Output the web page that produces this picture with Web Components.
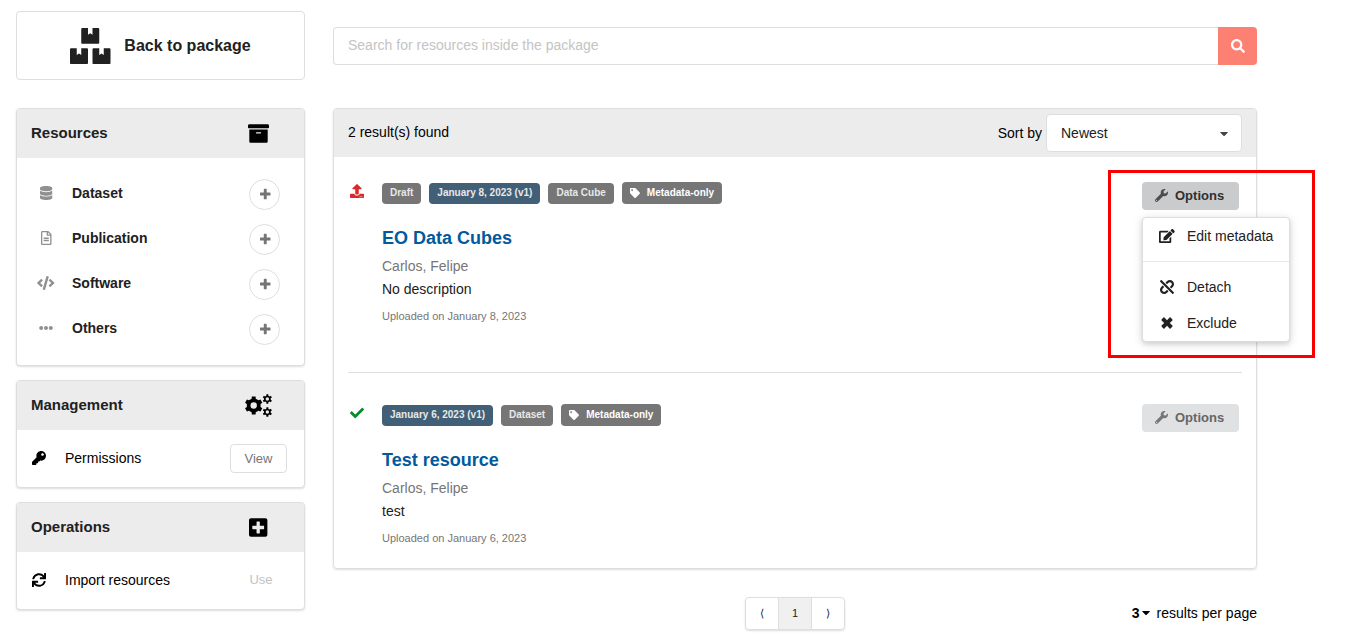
<!DOCTYPE html>
<html lang="en">
<head>
<meta charset="utf-8">
<title>Package resources</title>
<style>
  body { margin: 0; background: #fff; color: #212121; font: 14px/20px "Liberation Sans", Arial, sans-serif; }
</style>
</head>
<body>
<package-page></package-page>

<script>
const ICONS = {
  boxes: ['0 0 576 512', 'M560 288h-80v96l-32-21.3-32 21.3v-96h-80c-8.8 0-16 7.2-16 16v192c0 8.8 7.2 16 16 16h224c8.8 0 16-7.2 16-16V304c0-8.8-7.2-16-16-16zm-384-64h224c8.8 0 16-7.2 16-16V16c0-8.8-7.2-16-16-16h-80v96l-32-21.3L256 96V0h-80c-8.8 0-16 7.2-16 16v192c0 8.8 7.2 16 16 16zm64 64h-80v96l-32-21.3L96 384v-96H16c-8.8 0-16 7.2-16 16v192c0 8.8 7.2 16 16 16h224c8.8 0 16-7.2 16-16V304c0-8.8-7.2-16-16-16z'],
  archive: ['0 0 512 512', 'M32 448c0 17.7 14.3 32 32 32h384c17.7 0 32-14.3 32-32V160H32v288zm160-212c0-6.6 5.4-12 12-12h104c6.6 0 12 5.4 12 12v8c0 6.6-5.4 12-12 12H204c-6.6 0-12-5.4-12-12v-8zM480 32H32C14.3 32 0 46.3 0 64v48c0 8.8 7.2 16 16 16h480c8.8 0 16-7.2 16-16V64c0-17.7-14.3-32-32-32z'],
  database: ['0 0 448 512', 'M448 73.143v45.714C448 159.143 347.667 192 224 192S0 159.143 0 118.857V73.143C0 32.857 100.333 0 224 0s224 32.857 224 73.143zM448 176v102.857C448 319.143 347.667 352 224 352S0 319.143 0 278.857V176c48.125 33.143 136.208 48.572 224 48.572S399.874 209.143 448 176zm0 160v102.857C448 479.143 347.667 512 224 512S0 479.143 0 438.857V336c48.125 33.143 136.208 48.572 224 48.572S399.874 369.143 448 336z'],
  file: ['0 0 384 512', 'M288 248v28c0 6.6-5.4 12-12 12H108c-6.6 0-12-5.4-12-12v-28c0-6.6 5.4-12 12-12h168c6.6 0 12 5.4 12 12zm-12 72H108c-6.6 0-12 5.4-12 12v28c0 6.6 5.4 12 12 12h168c6.6 0 12-5.4 12-12v-28c0-6.6-5.4-12-12-12zm108-188.1V464c0 26.5-21.5 48-48 48H48c-26.5 0-48-21.5-48-48V48C0 21.5 21.5 0 48 0h204.1C264.8 0 277 5.1 286 14.1L369.9 98c9 8.9 14.1 21.2 14.1 33.9zm-128-80V128h76.1L256 51.9zM336 464V176H232c-13.3 0-24-10.7-24-24V48H48v416h288z'],
  code: ['0 0 640 512', 'M278.9 511.5l-61-17.7c-6.4-1.8-10-8.5-8.2-14.9L346.2 8.7c1.8-6.4 8.5-10 14.9-8.2l61 17.7c6.4 1.8 10 8.5 8.2 14.9L293.8 503.3c-1.9 6.4-8.5 10.1-14.9 8.2zm-114-112.2l43.5-46.4c4.6-4.9 4.3-12.7-.8-17.2L117 256l90.6-79.7c5.1-4.5 5.5-12.3.8-17.2l-43.5-46.4c-4.5-4.8-12.1-5.1-17-.5L3.8 247.2c-5.1 4.7-5.1 12.8 0 17.5l144.1 135.1c4.9 4.6 12.5 4.4 17-.5zm327.2.6l144.1-135.1c5.1-4.7 5.1-12.8 0-17.5L492.1 112.1c-4.8-4.5-12.4-4.3-17 .5L431.6 159c-4.6 4.9-4.3 12.7.8 17.2L523 256l-90.6 79.7c-5.1 4.5-5.5 12.3-.8 17.2l43.5 46.4c4.5 4.9 12.1 5.1 17 .6z'],
  ellipsis: ['0 0 512 512', 'M328 256c0 39.8-32.2 72-72 72s-72-32.2-72-72 32.2-72 72-72 72 32.2 72 72zm104-72c-39.8 0-72 32.2-72 72s32.2 72 72 72 72-32.2 72-72-32.2-72-72-72zm-352 0c-39.8 0-72 32.2-72 72s32.2 72 72 72 72-32.2 72-72-32.2-72-72-72z'],
  plus: ['0 0 448 512', 'M448 294.2v-76.4c0-13.3-10.7-24-24-24H286.2V56c0-13.3-10.7-24-24-24h-76.4c-13.3 0-24 10.7-24 24v137.8H24c-13.3 0-24 10.7-24 24v76.4c0 13.3 10.7 24 24 24h137.8V456c0 13.3 10.7 24 24 24h76.4c13.3 0 24-10.7 24-24V318.2H424c13.3 0 24-10.7 24-24z'],
  key: ['0 0 512 512', 'M512 176.001C512 273.203 433.202 352 336 352c-11.22 0-22.19-1.062-32.827-3.069l-24.012 27.014A23.999 23.999 0 0 1 261.223 384H224v40c0 13.255-10.745 24-24 24h-40v40c0 13.255-10.745 24-24 24H24c-13.255 0-24-10.745-24-24v-78.059c0-6.365 2.529-12.47 7.029-16.971l161.802-161.802C163.108 213.814 160 195.271 160 176 160 78.798 238.797.001 335.999 0 433.488-.001 512 78.511 512 176.001zM336 128c0 26.51 21.49 48 48 48s48-21.49 48-48-21.49-48-48-48-48 21.49-48 48z'],
  sync: ['0 0 512 512', 'M440.65 12.57l4 82.77A247.16 247.16 0 0 0 255.83 8C134.73 8 33.91 94.92 12.29 209.82A12 12 0 0 0 24.09 224h49.05a12 12 0 0 0 11.67-9.26 175.91 175.91 0 0 1 317-56.94l-101.46-4.86a12 12 0 0 0-12.57 12v47.41a12 12 0 0 0 12 12H500a12 12 0 0 0 12-12V12a12 12 0 0 0-12-12h-47.37a12 12 0 0 0-11.98 12.57zM255.83 432a175.61 175.61 0 0 1-146-77.8l101.8 4.87a12 12 0 0 0 12.57-12v-47.4a12 12 0 0 0-12-12H12a12 12 0 0 0-12 12V500a12 12 0 0 0 12 12h47.35a12 12 0 0 0 12-12.6l-4.15-82.57A247.17 247.17 0 0 0 255.83 504c121.11 0 221.93-86.92 243.55-201.82a12 12 0 0 0-11.8-14.18h-49.05a12 12 0 0 0-11.67 9.26A175.86 175.86 0 0 1 255.83 432z'],
  plusSquare: ['0 0 448 512', 'M400 32H48C21.5 32 0 53.5 0 80v352c0 26.5 21.5 48 48 48h352c26.5 0 48-21.5 48-48V80c0-26.5-21.5-48-48-48zm-32 252c0 6.6-5.4 12-12 12h-92v92c0 6.6-5.4 12-12 12h-56c-6.6 0-12-5.4-12-12v-92H92c-6.6 0-12-5.4-12-12v-56c0-6.6 5.4-12 12-12h92v-92c0-6.6 5.4-12 12-12h56c6.6 0 12 5.4 12 12v92h92c6.6 0 12 5.4 12 12v56z'],
  search: ['0 0 512 512', 'M505 442.7L405.3 343c-4.5-4.5-10.6-7-17-7H372c27.6-35.3 44-79.7 44-128C416 93.1 322.9 0 208 0S0 93.1 0 208s93.1 208 208 208c48.3 0 92.7-16.4 128-44v16.3c0 6.4 2.5 12.5 7 17l99.7 99.7c9.4 9.4 24.6 9.4 33.9 0l28.3-28.3c9.4-9.4 9.4-24.6.1-34zM208 336c-70.7 0-128-57.2-128-128 0-70.7 57.2-128 128-128 70.7 0 128 57.2 128 128 0 70.7-57.2 128-128 128z'],
  upload: ['0 0 512 512', 'M296 384h-80c-13.3 0-24-10.7-24-24V192h-87.7c-17.8 0-26.7-21.5-14.1-34.1L242.3 5.7c7.5-7.5 19.8-7.5 27.3 0l152.2 152.2c12.6 12.6 3.7 34.1-14.1 34.1H320v168c0 13.3-10.7 24-24 24zm216-8v112c0 13.3-10.7 24-24 24H24c-13.3 0-24-10.7-24-24V376c0-13.3 10.7-24 24-24h136v8c0 30.9 25.1 56 56 56h80c30.9 0 56-25.1 56-56v-8h136c13.3 0 24 10.7 24 24zm-124 88c0-11-9-20-20-20s-20 9-20 20 9 20 20 20 20-9 20-20zm64 0c0-11-9-20-20-20s-20 9-20 20 9 20 20 20 20-9 20-20z'],
  check: ['0 0 512 512', 'M173.898 439.404l-166.4-166.4c-9.997-9.997-9.997-26.206 0-36.204l36.203-36.204c9.997-9.998 26.207-9.998 36.204 0L192 312.69 432.095 72.596c9.997-9.997 26.207-9.997 36.204 0l36.203 36.204c9.997 9.997 9.997 26.206 0 36.204l-294.4 294.401c-9.998 9.997-26.207 9.997-36.204-.001z'],
  tag: ['0 0 512 512', 'M0 252.118V48C0 21.49 21.49 0 48 0h204.118a48 48 0 0 1 33.941 14.059l211.882 211.882c18.745 18.745 18.745 49.137 0 67.882L293.823 497.941c-18.745 18.745-49.137 18.745-67.882 0L14.059 286.059A48 48 0 0 1 0 252.118zM112 64c-26.51 0-48 21.49-48 48s21.49 48 48 48 48-21.49 48-48-21.49-48-48-48z'],
  wrench: ['0 0 512 512', 'M507.73 109.1c-2.24-9.03-13.54-12.09-20.12-5.51l-74.36 74.36-67.88-11.31-11.31-67.88 74.36-74.36c6.62-6.62 3.43-17.9-5.66-20.16-47.38-11.74-99.55.91-136.58 37.93-39.64 39.64-50.55 97.1-34.05 147.2L18.74 402.76c-24.99 24.99-24.99 65.51 0 90.5 24.99 24.99 65.51 24.99 90.5 0l213.21-213.21c50.12 16.71 107.47 5.68 147.37-34.22 37.07-37.07 49.7-89.32 37.91-136.73zM64 472c-13.25 0-24-10.75-24-24 0-13.26 10.75-24 24-24s24 10.74 24 24c0 13.25-10.75 24-24 24z'],
  edit: ['0 0 576 512', 'M402.6 83.2l90.2 90.2c3.8 3.8 3.8 10 0 13.8L274.4 405.6l-92.8 10.3c-12.4 1.4-22.9-9.1-21.5-21.5l10.3-92.8L388.8 83.2c3.8-3.8 10-3.8 13.8 0zm162-22.9l-48.8-48.8c-15.2-15.2-39.9-15.2-55.2 0l-35.4 35.4c-3.8 3.8-3.8 10 0 13.8l90.2 90.2c3.8 3.8 10 3.8 13.8 0l35.4-35.4c15.2-15.3 15.2-40 0-55.2zM384 346.2V448H64V128h229.8c3.2 0 6.2-1.3 8.5-3.5l40-40c7.6-7.6 2.2-20.5-8.5-20.5H48C21.5 64 0 85.5 0 112v352c0 26.5 21.5 48 48 48h352c26.5 0 48-21.5 48-48V306.2c0-10.7-12.9-16-20.5-8.5l-40 40c-2.2 2.3-3.5 5.3-3.5 8.5z'],
  unlink: ['0 0 512 512', 'M304.083 405.907c4.686 4.686 4.686 12.284 0 16.971l-44.674 44.674c-59.263 59.262-155.693 59.266-214.961 0-59.264-59.265-59.264-155.696 0-214.96l44.675-44.675c4.686-4.686 12.284-4.686 16.971 0l39.598 39.598c4.686 4.686 4.686 12.284 0 16.971l-44.675 44.674c-28.072 28.073-28.072 73.75 0 101.823 28.072 28.072 73.75 28.073 101.824 0l44.674-44.674c4.686-4.686 12.284-4.686 16.971 0l39.597 39.598zm-56.568-260.216c4.686 4.686 12.284 4.686 16.971 0l44.674-44.674c28.072-28.075 73.75-28.073 101.824 0 28.072 28.073 28.072 73.75 0 101.823l-44.675 44.674c-4.686 4.686-4.686 12.284 0 16.971l39.598 39.598c4.686 4.686 12.284 4.686 16.971 0l44.675-44.675c59.263-59.265 59.265-155.695 0-214.96-59.266-59.264-155.695-59.264-214.961 0l-44.674 44.674c-4.686 4.686-4.686 12.284 0 16.971l39.597 39.598zm234.828 359.28l22.627-22.627c9.373-9.373 9.373-24.569 0-33.941L63.598 7.029c-9.373-9.373-24.569-9.373-33.941 0L7.029 29.657c-9.373 9.373-9.373 24.569 0 33.941l441.373 441.373c9.373 9.372 24.569 9.372 33.941 0z'],
  close: ['0 0 14 14', 'M4.4 1.6 7 4.2 9.6 1.6q.5-.5 1 0L12.4 3.4q.5.5 0 1L9.8 7l2.6 2.6q.5.5 0 1L10.6 12.4q-.5.5-1 0L7 9.8 4.4 12.4q-.5.5-1 0L1.6 10.6q-.5-.5 0-1L4.2 7 1.6 4.4q-.5-.5 0-1L3.4 1.6q.5-.5 1 0z'],
  caret: ['0 0 320 512', 'M31.3 192h257.3c17.8 0 26.7 21.5 14.1 34.1L174.1 354.8c-7.8 7.8-20.5 7.8-28.3 0L17.2 226.1C4.6 213.5 13.5 192 31.3 192z'],
  cogs: ['0 0 640 512', gear(212, 256, 222, 172, 78, 6) + gear(545, 98, 116, 84, 42, 6) + gear(545, 414, 116, 84, 42, 6)]
};

/* Outline of a toothed wheel with a round hole. */
function gear(cx, cy, outer, inner, hole, teeth) {
  const step = 2 * Math.PI / teeth, pts = [];
  for (let i = 0; i < teeth; i++) {
    for (const [part, r] of [[-0.28, inner], [-0.2, outer], [0.2, outer], [0.28, inner]]) {
      const a = (i + part) * step - Math.PI / 2;
      pts.push((cx + r * Math.cos(a)).toFixed(1) + ' ' + (cy + r * Math.sin(a)).toFixed(1));
    }
  }
  return 'M' + pts.join('L') + 'z' +
    `M${cx - hole} ${cy}a${hole} ${hole} 0 1 0 ${2 * hole} 0a${hole} ${hole} 0 1 0 ${-2 * hole} 0z`;
}

function define(name, html, setup) {
  const template = document.createElement('template');
  template.innerHTML = html;
  customElements.define(name, class extends HTMLElement {
    constructor() {
      super();
      this.attachShadow({ mode: 'open' }).append(template.content.cloneNode(true));
    }
    connectedCallback() { if (setup) setup(this, this.shadowRoot); }
  });
}

define('ui-icon', `
  <style>
    :host { display: inline-flex; flex: none; justify-content: center; align-items: center; width: 18px; height: 14px; }
    svg { height: 100%; fill: currentColor; fill-rule: evenodd; overflow: visible; display: block; }
  </style>
  <svg aria-hidden="true"><path/></svg>`, (host, root) => {
  const [box, d] = ICONS[host.getAttribute('name')];
  root.querySelector('svg').setAttribute('viewBox', box);
  root.querySelector('path').setAttribute('d', d);
});

define('back-button', `
  <style>
    :host { display: block; }
    button { display: flex; align-items: center; justify-content: center; gap: 14px; width: 100%; height: 69px;
      border: 1px solid #dededf; border-radius: 4px; background: #fff; color: #212121; font: bold 16px/20px "Liberation Sans", Arial, sans-serif; padding: 0; }
    ui-icon { width: 40px; height: 36px; }
  </style>
  <button type="button"><ui-icon name="boxes"></ui-icon><slot></slot></button>`);

define('side-panel', `
  <style>
    :host { display: block; border: 1px solid #dededf; border-radius: 4px; box-shadow: 0 1px 2px rgba(34,36,38,.15); background: #fff; }
    header { display: flex; align-items: center; justify-content: space-between; height: 49px; padding: 0 31px 0 14px; background: #ececec; border-radius: 3px 3px 0 0; }
    h2 { margin: 0; padding-bottom: 2px; font-size: 15px; line-height: 20px; }
    ui-icon { width: 29px; height: 21px; color: #000; }
  </style>
  <header><h2></h2></header>
  <slot></slot>`, (host, root) => {
  root.querySelector('h2').textContent = host.getAttribute('heading');
  const icon = document.createElement('ui-icon');
  icon.setAttribute('name', host.getAttribute('icon'));
  root.querySelector('header').append(icon);
});

define('resource-type', `
  <style>
    :host { display: flex; align-items: center; box-sizing: border-box; height: 45px; padding: 0 24px 2px 20px; }
    .kind { display: flex; margin-right: 17px; color: #909090; }
    b { flex: 1; }
    button { display: flex; align-items: center; justify-content: center; width: 31px; height: 31px; padding: 0 0 1px 1px; margin-top: 3px;
      border: 1px solid #dededf; border-radius: 50%; background: #fff; color: #767676; }
    button ui-icon { height: 12px; }
  </style>
  <span class="kind"></span><b><slot></slot></b>
  <button type="button"><ui-icon name="plus"></ui-icon></button>`, (host, root) => {
  const icon = document.createElement('ui-icon');
  icon.setAttribute('name', host.getAttribute('icon'));
  root.querySelector('.kind').append(icon);
  root.querySelector('button').setAttribute('aria-label', 'Add ' + host.textContent);
});

define('action-row', `
  <style>
    :host { display: flex; align-items: center; box-sizing: border-box; height: 57px; padding: 0 17px 2px 13px; color: #000; }
    .icon { display: flex; margin-right: 17px; }
    .label { flex: 1; }
    button { width: 57px; height: 29px; margin-top: 2px; padding: 0; border: 1px solid #dededf; border-radius: 4px; background: #fff; color: #767676; font: 13px/16px "Liberation Sans", Arial, sans-serif; }
    button:disabled { border-color: transparent; color: #c2c2c2; width: 52px; margin-top: 0; }
  </style>
  <span class="icon"></span><span class="label"><slot></slot></span><button type="button"></button>`, (host, root) => {
  const icon = document.createElement('ui-icon');
  icon.setAttribute('name', host.getAttribute('icon'));
  root.querySelector('.icon').append(icon);
  const button = root.querySelector('button');
  button.textContent = host.getAttribute('action');
  button.disabled = host.hasAttribute('disabled');
});

define('search-bar', `
  <style>
    :host { display: flex; height: 38px; }
    input { flex: 1; min-width: 0; box-sizing: border-box; border: 1px solid #dededf; border-right: 0; border-radius: 4px 0 0 4px; padding: 0 14px 2px; outline: 0;
      font: 14px/20px "Liberation Sans", Arial, sans-serif; color: #212121; background: #fff; }
    input::placeholder { color: #c4c4c4; opacity: 1; }
    button { display: flex; align-items: center; justify-content: center; width: 39px; padding: 0; border: 0; border-radius: 0 4px 4px 0; background: #fd8172; color: #fff; }
  </style>
  <input type="text" aria-label="Search" placeholder="Search for resources inside the package">
  <button type="button" aria-label="Search"><ui-icon name="search"></ui-icon></button>`);

define('sort-select', `
  <style>
    :host { display: flex; align-items: center; gap: 4px; color: #000; }
    .field { display: grid; align-items: center; }
    .field > * { grid-area: 1 / 1; }
    select { appearance: none; width: 196px; height: 38px; padding: 0 14px; border: 1px solid #dededf; border-radius: 4px; background: #fff; color: #212121;
      font: 14px/20px "Liberation Sans", Arial, sans-serif; }
    ui-icon { justify-self: end; margin-right: 9px; height: 13px; pointer-events: none; color: #444; }
  </style>
  <label for="sort">Sort by</label>
  <span class="field"><select id="sort"><option>Newest</option><option>Oldest</option></select><ui-icon name="caret"></ui-icon></span>`);

define('tag-label', `
  <style>
    :host { display: inline-flex; align-items: center; box-sizing: border-box; height: 21px; padding: 0 8px 2px; border-radius: 4px;
      background: #767676; color: #e8e8e8; font-weight: bold; font-size: 10px; line-height: 12px; white-space: nowrap; }
    :host([kind=date]) { background: #415f77; }
    :host([kind=meta]) { height: 22px; padding-bottom: 1px; color: #fff; }
    ui-icon { display: none; width: 10px; height: 10px; margin-right: 7px; }
    :host([kind=meta]) ui-icon { display: inline-flex; }
  </style>
  <ui-icon name="tag"></ui-icon><slot></slot>`);

define('options-menu', `
  <style>
    :host { display: block; position: relative; }
    .toggle { display: flex; align-items: center; gap: 5px; width: 97px; height: 28px; padding: 0 0 1px 10px; border: 0; border-radius: 4px;
      background: #e0e1e2; color: #666; font: bold 13px/16px "Liberation Sans", Arial, sans-serif; }
    .toggle ui-icon { height: 13px; color: #767676; }
    :host([open]) .toggle { background: #cacbcd; color: #303030; }
    :host([open]) .toggle ui-icon { color: #4c4c4c; }
    .menu { display: none; position: absolute; z-index: 2; top: 100%; left: 0; margin-top: 7px; width: 146px;
      border: 1px solid #dededf; border-radius: 4px; background: #fff; box-shadow: 0 2px 4px rgba(34,36,38,.12), 0 2px 10px rgba(34,36,38,.15); }
    :host([open]) .menu { display: block; }
    .menu button { display: flex; align-items: center; gap: 11px; width: 100%; height: 36px; padding: 0 15px; border: 0; background: none; color: #212121;
      font: 14px/20px "Liberation Sans", Arial, sans-serif; }
    hr { margin: 7px 0; border: 0; border-top: 1px solid #e8e8e9; }
    .frame { display: none; position: absolute; z-index: 3; top: -12px; left: -34px; width: 201px; height: 182px; border: 3px solid #f80000; pointer-events: none; }
    :host([open]) .frame { display: block; }
  </style>
  <button class="toggle" type="button"><ui-icon name="wrench"></ui-icon>Options</button>
  <div class="menu">
    <button type="button"><ui-icon name="edit"></ui-icon>Edit metadata</button>
    <hr>
    <button type="button"><ui-icon name="unlink"></ui-icon>Detach</button>
    <button type="button"><ui-icon name="close"></ui-icon>Exclude</button>
  </div>
  <div class="frame"></div>`);

define('resource-item', `
  <style>
    :host { display: grid; grid-template-columns: 34px 1fr auto; align-items: start; margin: 0 14px; padding: 25px 3px 44px 0; }
    :host([last]) { padding-top: 31px; padding-bottom: 18px; border-top: 1px solid #dededf; }
    .state { display: flex; height: 18px; align-items: center; }
    .state ui-icon { width: 17px; height: 14px; color: #db2828; }
    .state.check ui-icon { color: #088b2a; }
    .tags { display: flex; gap: 8px; align-items: flex-end; height: 22px; }
    h3 { margin: 22px 0 0; font-size: 18px; line-height: 24px; }
    a { color: #005a9c; text-decoration: none; }
    p { margin: 0; line-height: 23px; }
    .author { margin-top: 5px; color: #767676; }
    .date { margin-top: 4px; color: #767676; font-size: 11px; }
  </style>
  <div class="state"></div>
  <div>
    <div class="tags"><slot name="tag"></slot></div>
    <h3><a href="#"></a></h3>
    <p class="author">Carlos, Felipe</p>
    <p><slot></slot></p>
    <p class="date"></p>
  </div>
  <slot name="options"></slot>`, (host, root) => {
  const icon = document.createElement('ui-icon');
  icon.setAttribute('name', host.getAttribute('state'));
  root.querySelector('.state').append(icon);
  root.querySelector('.state').classList.add(host.getAttribute('state'));
  root.querySelector('a').textContent = host.getAttribute('heading');
  root.querySelector('.date').textContent = 'Uploaded on ' + host.getAttribute('date');
});

define('page-nav', `
  <style>
    :host { display: grid; grid-template-columns: 1fr auto 1fr; align-items: center; color: #000; }
    nav { grid-column: 2; display: flex; border: 1px solid #dededf; border-radius: 4px; box-shadow: 0 1px 2px rgba(34,36,38,.15); overflow: hidden; }
    a { width: 32px; height: 31px; text-align: center; font-size: 11px; line-height: 31px; color: #212121; text-decoration: none; border-left: 1px solid #dededf; }
    a:first-child { border: 0; }
    a[aria-current] { background: #f0f0f0; }
    .size { display: flex; justify-content: flex-end; align-items: center; padding-bottom: 2px; }
    button { display: flex; align-items: center; padding: 0; border: 0; background: none; color: #000; font: bold 14px/20px "Liberation Sans", Arial, sans-serif; margin-right: 5px; }
    ui-icon { width: 12px; height: 13px; }
  </style>
  <nav aria-label="Pages"><a href="#" aria-label="Previous">⟨</a><a href="#" aria-current="page">1</a><a href="#" aria-label="Next">⟩</a></nav>
  <div class="size"><button type="button">3<ui-icon name="caret"></ui-icon></button>results per page</div>`);

define('package-page', `
  <style>
    :host { display: grid; grid-template-columns: 289fr 924fr; column-gap: 28px; padding: 11px 95px 9px 16px; align-items: start; }
    aside { display: flex; flex-direction: column; gap: 14px; }
    back-button { margin-bottom: 14px; }
    .types { padding: 13px 0 14px; }
    search-bar { margin: 16px 0 43px; }
    .results { border: 1px solid #dededf; border-radius: 4px; box-shadow: 0 1px 2px rgba(34,36,38,.15); }
    .results > header { display: flex; align-items: center; justify-content: space-between; height: 48px; padding: 0 14px; background: #ececec; border-radius: 3px 3px 0 0; color: #000; }
    .count { padding-bottom: 2px; }
    page-nav { margin-top: 28px; }
  </style>
  <aside>
    <back-button>Back to package</back-button>
    <side-panel heading="Resources" icon="archive">
      <div class="types">
        <resource-type icon="database">Dataset</resource-type>
        <resource-type icon="file">Publication</resource-type>
        <resource-type icon="code">Software</resource-type>
        <resource-type icon="ellipsis">Others</resource-type>
      </div>
    </side-panel>
    <side-panel heading="Management" icon="cogs"><action-row icon="key" action="View">Permissions</action-row></side-panel>
    <side-panel heading="Operations" icon="plusSquare"><action-row icon="sync" action="Use" disabled>Import resources</action-row></side-panel>
  </aside>
  <main>
    <search-bar></search-bar>
    <section class="results">
      <header><span class="count">2 result(s) found</span><sort-select></sort-select></header>
      <resource-item state="upload" heading="EO Data Cubes" date="January 8, 2023">
        <tag-label slot="tag">Draft</tag-label>
        <tag-label slot="tag" kind="date">January 8, 2023 (v1)</tag-label>
        <tag-label slot="tag">Data Cube</tag-label>
        <tag-label slot="tag" kind="meta">Metadata-only</tag-label>
        No description
        <options-menu slot="options" open></options-menu>
      </resource-item>
      <resource-item state="check" heading="Test resource" date="January 6, 2023" last>
        <tag-label slot="tag" kind="date">January 6, 2023 (v1)</tag-label>
        <tag-label slot="tag">Dataset</tag-label>
        <tag-label slot="tag" kind="meta">Metadata-only</tag-label>
        test
        <options-menu slot="options"></options-menu>
      </resource-item>
    </section>
    <page-nav></page-nav>
  </main>`);
</script>
</body>
</html>
